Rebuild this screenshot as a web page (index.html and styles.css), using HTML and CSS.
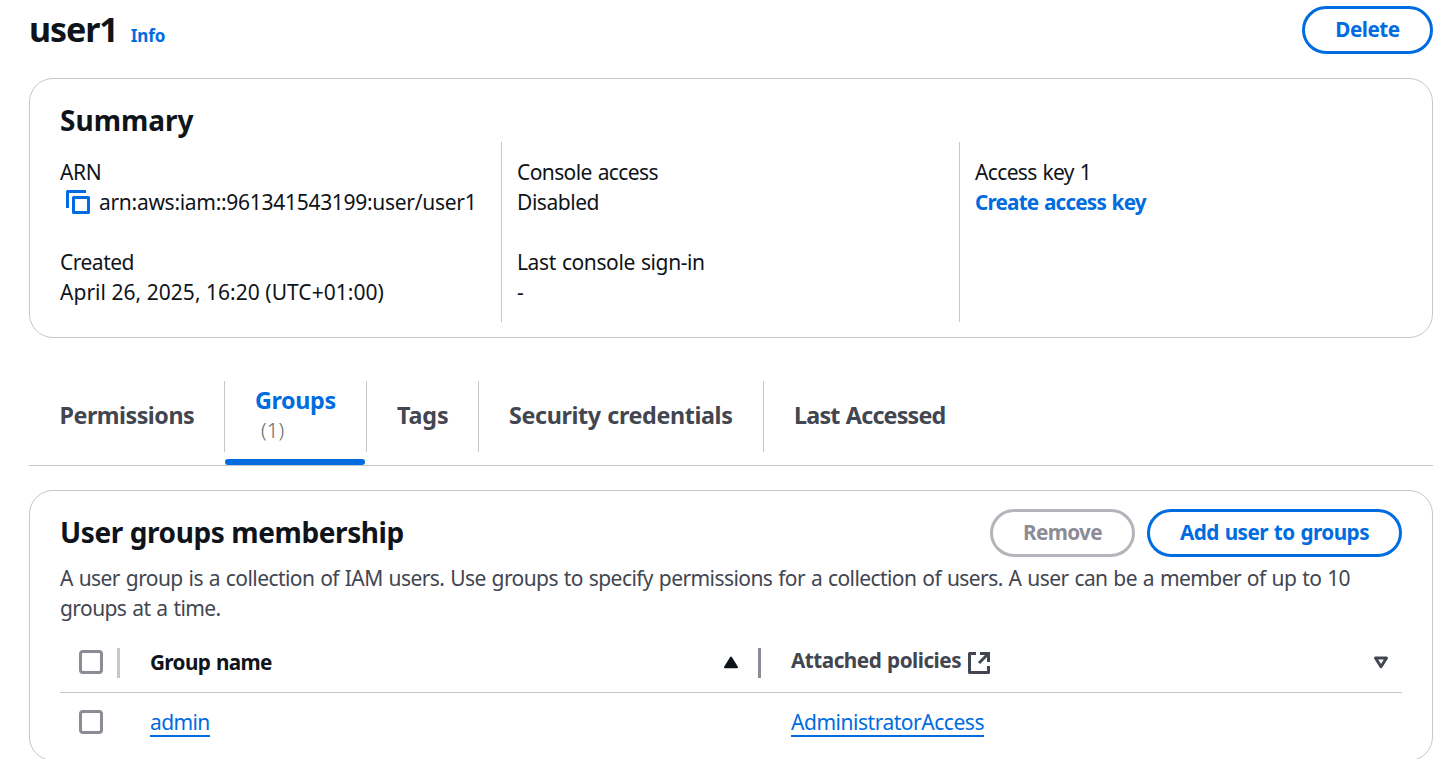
FILE: index.html
```html
<!DOCTYPE html>
<html lang="en">
<head>
<meta charset="utf-8">
<title>user1</title>
<link rel="stylesheet" href="styles.css">
</head>
<body>
<main class="page">
  <header class="page-header">
    <h1 class="page-title">user1</h1>
    <a class="info">Info</a>
    <button class="btn btn-delete"><span class="t-delete">Delete</span></button>
  </header>

  <section class="card summary">
    <h2 class="card-title"><span class="t-summary">Summary</span></h2>
    <div class="columns">
      <div class="column">
        <div class="pair">
          <div><span class="t-arn">ARN</span></div>
          <div class="copy-row">
            <svg class="copy" width="24" height="24" viewBox="0 0 24 24" fill="none" stroke="#006ce0" stroke-width="3"><path d="M1.5 18V1.5H20" stroke-linejoin="round"/><rect x="7.5" y="7.5" width="15" height="15" stroke-linejoin="round"/></svg>
            <span class="t-arnvalue">arn:aws:iam::961341543199:user/user1</span>
          </div>
        </div>
        <div class="pair">
          <div><span class="t-created">Created</span></div>
          <div><span class="t-date">April 26, 2025, 16:20 (UTC+01:00)</span></div>
        </div>
      </div>
      <div class="column">
        <div class="pair">
          <div><span class="t-console">Console access</span></div>
          <div><span class="t-disabled">Disabled</span></div>
        </div>
        <div class="pair">
          <div><span class="t-last">Last console sign-in</span></div>
          <div>-</div>
        </div>
      </div>
      <div class="column">
        <div class="pair">
          <div><span class="t-key">Access key 1</span></div>
          <div><a class="create-key">Create access key</a></div>
        </div>
      </div>
    </div>
  </section>

  <nav class="tabs">
    <div class="tab tab-permissions"><span class="t-permissions">Permissions</span></div>
    <div class="tab tab-groups active">
      <span class="t-groups">Groups</span>
      <span class="count">(1)</span>
    </div>
    <div class="tab tab-tags"><span class="t-tags">Tags</span></div>
    <div class="tab tab-security"><span class="t-security">Security credentials</span></div>
    <div class="tab tab-accessed"><span class="t-accessed">Last Accessed</span></div>
  </nav>

  <section class="card groups">
    <div class="groups-header">
      <h2 class="card-title"><span class="t-membership">User groups membership</span></h2>
      <div class="actions">
        <button class="btn btn-remove" disabled><span class="t-remove">Remove</span></button>
        <button class="btn btn-add"><span class="t-add">Add user to groups</span></button>
      </div>
    </div>
    <p class="description"><span class="t-desc1">A user group is a collection of IAM users. Use groups to specify permissions for a collection of users. A user can be a member of up to 10</span><br><span class="t-desc2">groups at a time.</span></p>
    <div class="row head">
      <div class="cell check"><span class="checkbox"></span><span class="resizer light"></span></div>
      <div class="cell name"><span class="t-groupname">Group name</span>
        <svg class="sort" width="16" height="13" viewBox="0 0 16 13"><path d="M8 1.5 14 11.2H2Z" fill="#0f141a" stroke="#0f141a" stroke-width="2" stroke-linejoin="round"/></svg>
        <span class="resizer"></span></div>
      <div class="cell policies"><span class="t-attached">Attached policies</span>
        <svg class="external" width="22" height="22" viewBox="0 0 22 22" fill="none" stroke="#424650" stroke-width="3"><path d="M8 1.5H1.5V20.5H20.5V14" stroke-linejoin="round"/><path d="M12 1.5H20.5V10M20 2 11 11"/></svg>
        <svg class="filter" width="16" height="13" viewBox="0 0 16 13"><path d="M2.5 2H13.5L8 10.7Z" fill="none" stroke="#424650" stroke-width="3" stroke-linejoin="round"/></svg>
      </div>
    </div>
    <div class="row body-row">
      <div class="cell check"><span class="checkbox"></span></div>
      <div class="cell name"><a class="link t-admin">admin</a></div>
      <div class="cell policies"><a class="link t-policy">AdministratorAccess</a></div>
    </div>
  </section>
</main>
</body>
</html>
```
FILE: styles.css
```css
* { box-sizing: border-box; }
html, body { margin: 0; height: 759px; overflow: hidden; background: #fff; }
body { font: 21px/30px "Noto Sans", "Open Sans", sans-serif; color: #0f141a; }
span, a { white-space: nowrap; }
h1, h2, p { margin: 0; }

.page { padding: 6px 14px 0 29px; }
.page-header { display: flex; height: 48px; align-items: center; }
.page-title { font-size: 34px; line-height: 45px; font-weight: 700; letter-spacing: -1.1px; margin-top: -2px; }
.info { color: #006ce0; font-size: 17px; font-weight: 700; margin: 12px 0 0 13px; }

.btn { height: 48px; padding: 0 0 2px; border: 3px solid #006ce0; border-radius: 30px; background: #fff; color: #006ce0; font: 700 20.7px/30px "Noto Sans", "Open Sans", sans-serif; text-align: center; }
.btn-delete { width: 131px; margin-left: auto; }
.btn-remove { width: 145px; color: #8c8c94; border-color: #b4b4bb; }
.btn-add { width: 255px; }

.card { border: 1px solid #c6c6cd; border-radius: 24px; }
.card-title { font-size: 28px; line-height: 36px; font-weight: 700; }

.summary { height: 260px; margin-top: 24px; padding: 23px 30px 0; }
.columns { display: grid; grid-template-columns: 441px 458px 1fr; height: 180px; margin-top: 4px; }
.column { padding: 15px 0; }
.column + .column { padding-left: 15px; border-left: 1px solid #c6c6cd; }
.pair + .pair { margin-top: 30px; }
.copy-row { display: flex; align-items: center; }
.copy { margin: 0 9px 0 6px; }
.create-key { color: #006ce0; font-weight: 700; font-size: 20.7px; }

.tabs { display: flex; height: 86px; margin-top: 42px; padding-top: 1px; border-bottom: 1px solid #c6c6cd; font-size: 23.3px; font-weight: 700; color: #424650; }
.tab { display: flex; flex-direction: column; justify-content: center; align-items: flex-start; height: 71px; padding: 0 0 3px 30px; border-right: 1px solid #c6c6cd; }
.tab:first-child { padding-left: 30.5px; }
.tab:last-child { border: 0; }
.tab-permissions { width: 196px; }
.tab-groups { width: 142px; }
.tab-tags { width: 112px; }
.tab-security { width: 285px; }
.active { position: relative; color: #006ce0; }
.active::after { content: ""; position: absolute; left: 0; bottom: -13px; width: 140px; height: 6px; border-radius: 3px; background: #006ce0; }
.count { margin-left: 6px; font-size: 20.5px; font-weight: 300; color: #656871; }

.groups { height: 271px; margin-top: 24px; padding: 18px 30px 0; }
.groups-header { display: flex; justify-content: space-between; align-items: center; height: 48px; }
.groups-header .card-title { margin-bottom: 2px; }
.actions { display: flex; gap: 12px; }
.description { margin-top: 6px; color: #424650; }
.row { display: grid; grid-template-columns: 60px 641px 1fr; height: 60px; }
.head { height: 70px; padding-top: 9px; border-bottom: 1px solid #c6c6cd; font-weight: 700; font-size: 20.7px; }
.cell { display: flex; align-items: center; }
.check { padding-left: 19px; }
.checkbox { width: 24px; height: 24px; border: 3px solid #8c8c94; border-radius: 4px; }
.resizer { width: 3px; height: 30px; margin-top: 2px; background: #8c8c94; }
.check .resizer { margin-left: 14px; }
.light { background: #c6c6cd; }
.name, .policies { padding-left: 30px; }
.sort { margin: 1px 19px 0 auto; }
.head .policies { color: #424650; }
.t-attached { padding-bottom: 4px; }
.external { margin: 1px 0 0 7px; }
.filter { margin: 1px 13px 0 auto; }
.body-row .check { padding-bottom: 2px; }
.link { color: #006ce0; border-bottom: 2px solid #006ce0; line-height: 26px; }

/* Tracking, set per label */
.t-membership { letter-spacing: -.4px; }
.t-arn { letter-spacing: -.4px; }
.t-arnvalue { letter-spacing: -.29px; }
.t-created { letter-spacing: -.5px; }
.t-date { letter-spacing: .03px; }
.t-console { letter-spacing: -.6px; word-spacing: 1px; }
.t-disabled { letter-spacing: -.45px; }
.t-last { letter-spacing: -.4px; word-spacing: 1px; }
.t-key { letter-spacing: -.65px; word-spacing: 1px; }
.create-key { letter-spacing: -.8px; word-spacing: 1px; }
.t-permissions { letter-spacing: -.5px; }
.t-groups { letter-spacing: -.35px; }
.t-tags { letter-spacing: -.1px; }
.t-security { letter-spacing: -.38px; word-spacing: 1px; }
.t-accessed { letter-spacing: -.8px; word-spacing: 1px; }
.t-delete { letter-spacing: -.5px; }
.t-remove { letter-spacing: -.63px; }
.t-add { letter-spacing: -.54px; word-spacing: 1px; }
.t-desc1 { letter-spacing: -.58px; word-spacing: 1px; }
.t-desc2 { letter-spacing: -.58px; word-spacing: 1px; }
.t-groupname { letter-spacing: -.62px; word-spacing: 1px; }
.t-attached { letter-spacing: -.5px; word-spacing: 1px; }
.t-admin { letter-spacing: -.6px; }
.t-policy { letter-spacing: -.47px; }
```
